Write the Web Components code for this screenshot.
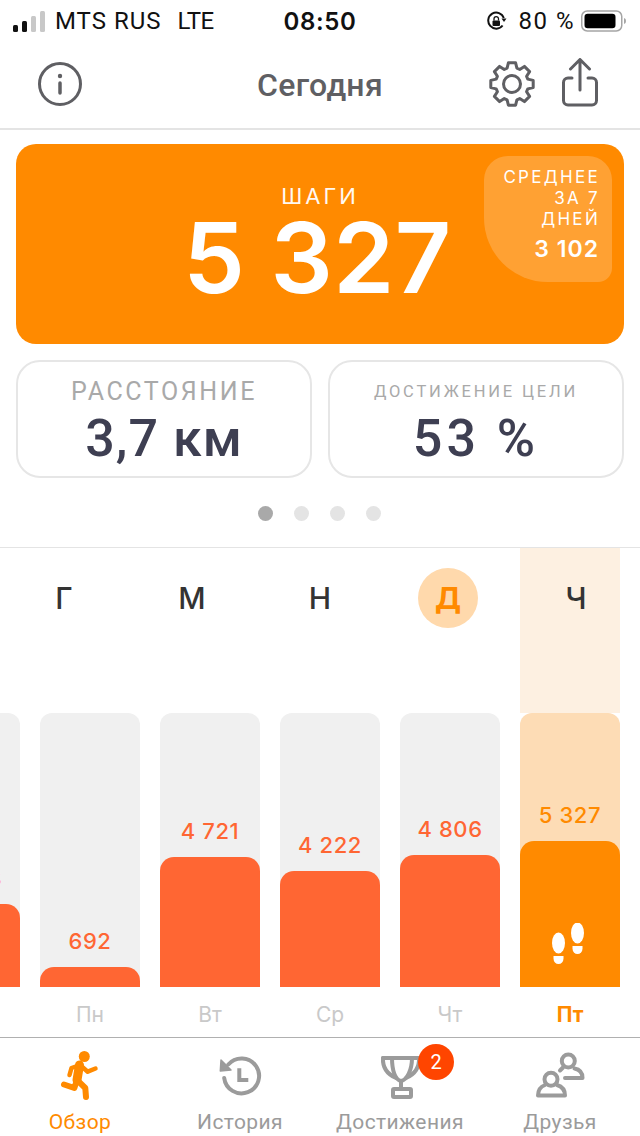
<!DOCTYPE html>
<html lang="ru">
<head>
<meta charset="utf-8">
<title>Сегодня</title>
<style>
	html, body { margin: 0; padding: 0; background: #fff; }
	body { font-family: "Roboto", "Liberation Sans", sans-serif; }
</style>
</head>
<body>
<app-screen>
	<status-bar></status-bar>
	<nav-bar title="Сегодня"></nav-bar>
	<step-card label="ШАГИ" value="5 327" avg="3 102"></step-card>
	<stat-row>
		<stat-card label="РАССТОЯНИЕ" value="3,7 км"></stat-card>
		<stat-card small label="ДОСТИЖЕНИЕ ЦЕЛИ" value="53 %"></stat-card>
	</stat-row>
	<pager-dots></pager-dots>
	<week-chart>
		<week-letters slot="letters">
			<span>Г</span><span>М</span><span>Н</span><span class="now">Д</span><span>Ч</span>
		</week-letters>
		<day-col fill="83" value="3 028"></day-col>
		<day-col day="Пн" fill="20" value="692"></day-col>
		<day-col day="Вт" fill="130" value="4 721"></day-col>
		<day-col day="Ср" fill="116" value="4 222"></day-col>
		<day-col day="Чт" fill="132" value="4 806"></day-col>
		<day-col day="Пт" fill="146" value="5 327" today></day-col>
	</week-chart>
	<tab-bar>
		<tab-item label="Обзор" icon="run" active></tab-item>
		<tab-item label="История" icon="history"></tab-item>
		<tab-item label="Достижения" icon="trophy" badge="2"></tab-item>
		<tab-item label="Друзья" icon="friends"></tab-item>
	</tab-bar>
</app-screen>

<script>
	// plain helper: 8 tooth gear outline
	function gearPath(cx, cy, outer, root) {
		const pts = [];
		for (let i = 0; i < 8; i++) {
			const a = (i * 45 - 90) * Math.PI / 180;
			const p = (r, t) => `${(cx + r * Math.cos(a + t)).toFixed(1)},${(cy + r * Math.sin(a + t)).toFixed(1)}`;
			pts.push(p(root, -0.3), p(outer, -0.17), p(outer, 0.17), p(root, 0.3));
		}
		return "M" + pts.join(" L") + " Z";
	}

	class Base extends HTMLElement {
		constructor() {
			super();
			this.attachShadow({ mode: "open" });
		}
		attr(name, fallback = "") {
			return this.getAttribute(name) ?? fallback;
		}
	}

	class AppScreen extends Base {
		connectedCallback() {
			this.shadowRoot.innerHTML = `
				<style>
					:host { display: flex; flex-direction: column; width: 640px; height: 1136px; overflow: hidden; background: #fff; }
				</style>
				<slot></slot>`;
		}
	}

	class StatusBar extends Base {
		connectedCallback() {
			this.shadowRoot.innerHTML = `
				<style>
					:host { display: grid; grid-template-columns: 1fr auto 1fr; align-items: center; height: 40px; padding: 2px 13px 0 13px; box-sizing: border-box; font: 400 24px "Roboto", sans-serif; color: #111; flex: none; }
					.left, .right { display: flex; align-items: center; }
					.left { gap: 9px; }
					.mts { letter-spacing: 1px; }
					.lte { margin-left: 7px; letter-spacing: -.5px; }
					.right { justify-content: flex-end; }
					.time { font: 600 24px "Inter", sans-serif; letter-spacing: .6px; }
					.pct { margin: 0 6px 0 11px; letter-spacing: 1.500px; }
				</style>
				<div class="left">
					<svg width="33" height="22" viewBox="0 0 33 22">
						<rect x="0" y="15" width="5" height="7" rx="1.5" fill="#111"/>
						<rect x="9" y="11" width="5" height="11" rx="1.5" fill="#111"/>
						<rect x="18" y="6" width="5" height="16" rx="1.5" fill="#c8c8c8"/>
						<rect x="27" y="1" width="5" height="21" rx="1.5" fill="#c8c8c8"/>
					</svg>
					<span class="mts">MTS RUS</span><span class="lte">LTE</span>
				</div>
				<div class="time">08:50</div>
				<div class="right">
					<svg width="21" height="21" viewBox="0 0 21 21" fill="none">
						<path d="M16.6 14.5A8 8 0 1 1 17.8 7" stroke="#111" stroke-width="2"/>
						<path d="M20.5 7.5 L15.5 7.5 L18 11Z" fill="#111"/>
						<rect x="6.5" y="9.5" width="7.5" height="5.5" rx="1" fill="#111"/>
						<path d="M8 9.5V7.8a2.2 2.2 0 0 1 4.5 0V9.5" stroke="#111" stroke-width="1.3"/>
					</svg>
					<span class="pct">80 %</span>
					<svg width="46" height="22" viewBox="0 0 46 22" fill="none">
						<rect x="0.75" y="1" width="40" height="20" rx="5.5" stroke="#a5a5a5" stroke-width="1.5"/>
						<rect x="3.5" y="3.8" width="31" height="14.4" rx="3.2" fill="#000"/>
						<path d="M43 8v6a3 3 0 0 0 2-3a3 3 0 0 0-2-3Z" fill="#a5a5a5"/>
					</svg>
				</div>`;
		}
	}

	class NavBar extends Base {
		connectedCallback() {
			this.shadowRoot.innerHTML = `
				<style>
					:host { display: flex; align-items: center; height: 90px; box-sizing: border-box; border-bottom: 2px solid #e4e4e4; padding: 0 38px; color: #5f5f63; flex: none; }
					.side { width: 170px; display: flex; align-items: center; box-sizing: border-box; }
					.right { justify-content: flex-end; gap: 26px; padding-right: 4px; }
					h1 { flex: 1; margin: 0; text-align: center; font: 500 32px "Roboto", sans-serif; letter-spacing: .3px; color: #5f5f63; padding-top: 2px; white-space: nowrap; }
					svg { display: block; fill: none; stroke: currentColor; }
				</style>
				<div class="side">
					<svg width="44" height="44" viewBox="0 0 44 44" stroke-width="3">
						<circle cx="22" cy="22" r="20.5"/>
						<path d="M22 21v10" stroke-linecap="round" stroke-width="3.5"/>
						<circle cx="22" cy="14" r="2.2" fill="currentColor" stroke="none"/>
					</svg>
				</div>
				<h1>${this.attr("title")}</h1>
				<div class="side right">
					<svg width="48" height="48" viewBox="0 0 48 48" stroke-width="3" stroke-linejoin="round">
						<path d="${gearPath(24, 24, 21.5, 16.5)}"/>
						<circle cx="24" cy="24" r="8.500"/>
					</svg>
					<svg width="36" height="50" viewBox="0 0 36 50" stroke-width="3" stroke-linecap="round" stroke-linejoin="round" style="margin-top:-2px">
						<path d="M10 20H6a4.500 4.500 0 0 0-4.500 4.500V42.500A4.500 4.500 0 0 0 6 47H30a4.500 4.500 0 0 0 4.500-4.500V24.500A4.500 4.500 0 0 0 30 20H26"/>
						<path d="M18 32V2M8.500 11L18 1.500L27.500 11"/>
					</svg>
				</div>`;
		}
	}

	class StepCard extends Base {
		connectedCallback() {
			this.shadowRoot.innerHTML = `
				<style>
					:host { display: flex; flex-direction: column; align-items: center; position: relative; flex: none; height: 200px; margin: 14px 16px 0; background: #ff8a00; border-radius: 20px; color: #fff; box-sizing: border-box; padding-top: 38px; }
					.label { font: 400 22px/28px "Inter", sans-serif; letter-spacing: 3px; opacity: .95; }
					.value { font: 600 98px/92px "Inter", sans-serif; letter-spacing: .5px; margin: 2px 5px 0 0; }
					.avg { position: absolute; top: 12px; right: 12px; width: 128px; height: 126px; box-sizing: border-box; padding: 11px 12px 0 0; text-align: right; background: rgba(255,255,255,.2); border-radius: 24px 24px 14px 64px; font: 400 17px/21px "Inter", sans-serif; letter-spacing: 2.300px; }
					.avg b { display: block; font: 600 23px/30px "Inter", sans-serif; letter-spacing: 1px; margin-top: 4px; padding-right: 1px; }
				</style>
				<div class="label">${this.attr("label")}</div>
				<div class="value">${this.attr("value")}</div>
				<div class="avg">СРЕДНЕЕ<br>ЗА 7<br>ДНЕЙ<b>${this.attr("avg")}</b></div>`;
		}
	}

	class StatRow extends Base {
		connectedCallback() {
			this.shadowRoot.innerHTML = `
				<style>
					:host { display: grid; grid-template-columns: 296px 296px; justify-content: space-between; margin: 16px 16px 0; height: 118px; flex: none; }
				</style>
				<slot></slot>`;
		}
	}

	class StatCard extends Base {
		connectedCallback() {
			const small = this.hasAttribute("small");
			this.shadowRoot.innerHTML = `
				<style>
					:host { display: flex; flex-direction: column; align-items: center; box-sizing: border-box; border: 2px solid #e6e6e6; border-radius: 24px; padding-top: ${small ? 18 : 15}px; color: #3e3f52; }
					.label { font: 400 ${small ? "16.500px/24px" : "25px/30px"} "Roboto", sans-serif; letter-spacing: ${small ? 2.8 : 2.6}px; color: #a9a9a9; white-space: nowrap; }
					.value { font: 500 52px/${small ? 61 : 55}px "Roboto", sans-serif; margin-top: 4px; letter-spacing: ${small ? 4 : 1}px; white-space: nowrap; }
				</style>
				<div class="label">${this.attr("label")}</div>
				<div class="value">${this.attr("value")}</div>`;
		}
	}

	class PagerDots extends Base {
		connectedCallback() {
			this.shadowRoot.innerHTML = `
				<style>
					:host { display: flex; justify-content: center; align-items: center; gap: 21px; height: 69px; padding: 2px 2px 0 0; box-sizing: border-box; flex: none; }
					i { width: 15px; height: 15px; border-radius: 50%; background: #e4e4e4; }
					i:first-of-type { background: #a9a9a9; }
				</style>
				<i></i><i></i><i></i><i></i>`;
		}
	}

	class WeekChart extends Base {
		connectedCallback() {
			this.shadowRoot.innerHTML = `
				<style>
					:host { display: grid; flex: 1; border-top: 1px solid #e4e4e4; overflow: hidden; }
					.strip { grid-area: 1 / 1; display: flex; gap: 20px; margin-left: -80px; }
					::slotted(week-letters) { grid-area: 1 / 1; }
				</style>
				<div class="strip"><slot></slot></div>
				<slot name="letters"></slot>`;
		}
	}

	// the letter row runs on its own 5 column grid, not on the bar columns
	class WeekLetters extends Base {
		connectedCallback() {
			this.shadowRoot.innerHTML = `
				<style>
					:host { display: grid; grid-template-columns: repeat(5, 128px); align-self: start; padding-top: 20px; }
					::slotted(span) { justify-self: center; width: 60px; height: 60px; border-radius: 50%; display: flex; align-items: center; justify-content: center; font: 500 30px "Inter", sans-serif; color: #333; }
					::slotted(.now) { color: #ff8a00; background: #ffd9ac; font-weight: 700; }
				</style>
				<slot></slot>`;
		}
	}

	class DayCol extends Base {
		connectedCallback() {
			const today = this.hasAttribute("today");
			const accent = today ? "#ff8a00" : "#ff6633";
			const feet = today ? `
				<svg width="32" height="42" viewBox="0 0 32 42" fill="#fff">
					<ellipse cx="6.500" cy="20" rx="6.500" ry="10.500"/>
					<path d="M1.500 33h10v2.500a5 5.500 0 0 1-10 0Z"/>
					<ellipse cx="25.500" cy="10" rx="6.500" ry="10.500"/>
					<path d="M20.500 23h10v2.500a5 5.500 0 0 1-10 0Z"/>
				</svg>` : "";
			this.shadowRoot.innerHTML = `
				<style>
					:host { display: flex; flex-direction: column; width: 100px; flex: none; }
					.head { height: 165px; background: ${today ? "#fdf0e1" : "transparent"}; }
					.track { height: 274px; display: flex; flex-direction: column; justify-content: flex-end; align-items: stretch; background: ${today ? "#fddcb5" : "#f0f0f0"}; border-radius: 12px 12px 0 0; }
					.num { text-align: center; font: 500 22px/26px "Inter", sans-serif; letter-spacing: .6px; color: ${accent}; margin-bottom: 13px; }
					.fill { display: flex; justify-content: center; align-items: flex-end; box-sizing: border-box; padding: ${today ? "0 4px 22px 0" : "0"}; background: ${accent}; border-radius: 14px 14px 0 0; }
					.fill svg { display: block; flex: none; }
					.day { height: 50px; box-sizing: border-box; padding-top: 15px; text-align: center; font: ${today ? 700 : 400} 21px/26px "Inter", sans-serif; color: ${today ? "#ff8a00" : "#c9c9c9"}; }
				</style>
				<div class="head"></div>
				<div class="track">
					<div class="num">${this.attr("value")}</div>
					<div class="fill" style="height:${this.attr("fill")}px">${feet}</div>
				</div>
				<div class="day">${this.attr("day")}</div>`;
		}
	}

	class TabBar extends Base {
		connectedCallback() {
			this.shadowRoot.innerHTML = `
				<style>
					:host { display: grid; grid-template-columns: repeat(4, 160px); height: 99px; box-sizing: border-box; border-top: 1px solid #b0b0b0; flex: none; }
				</style>
				<slot></slot>`;
		}
	}

	const TAB_ICONS = {
		run: `<g fill="none" stroke="#ff8a00" stroke-linecap="round" stroke-linejoin="round">
				<path d="M24.500 15 L22 30" stroke-width="9"/>
				<path d="M22 30 L30.300 38 L31 47" stroke-width="6"/>
				<path d="M22 30 L19.300 38 L9 34.500" stroke-width="6"/>
				<path d="M25 15 L32.700 21.700 L40.500 18.500" stroke-width="4.500"/>
				<path d="M25 15 L16.500 18 L14.500 25" stroke-width="4.500"/>
			</g><circle cx="29.300" cy="6.500" r="5.500" fill="#ff8a00"/>`,
		history: `<g fill="none" stroke="#9b9b9b" stroke-width="4" stroke-linecap="round" stroke-linejoin="round">
				<path d="M13.300 14.500 A17.500 17.500 0 1 1 9.200 28"/>
				<path d="M24.300 18.300 V30 H33.300" stroke-linecap="butt" stroke-linejoin="miter"/>
			</g><path d="M6 10 L5.300 21 L16 20 Z" fill="#9b9b9b" stroke="#9b9b9b" stroke-width="1.500" stroke-linejoin="round"/>`,
		trophy: `<g fill="none" stroke="#9b9b9b" stroke-width="4" stroke-linecap="round" stroke-linejoin="round">
				<path d="M8 8 H44"/>
				<path d="M8 8 C7.500 17 12 24 21 28"/>
				<path d="M44 8 C44.500 17 40 24 31 28"/>
				<path d="M17 8 C17 20 20 30 26 31 C32 30 37 20 37 8"/>
				<path d="M26 31 V39"/>
				<rect x="18" y="39" width="18" height="8" rx="1"/>
			</g>`,
		friends: `<g fill="none" stroke="#9b9b9b" stroke-width="4" stroke-linecap="round" stroke-linejoin="round">
				<circle cx="33.300" cy="11" r="6.500"/>
				<path d="M30 28 H47.500 C47.500 23 45 19.500 39.500 18.500"/>
				<path d="M28 17.500 L25 20.500"/>
				<circle cx="16" cy="29.300" r="6.500"/>
				<path d="M10 35 C6 36.500 3 40 3 45.500 H30 C30 40 27 36.500 22 35"/>
			</g>`,
	};

	class TabItem extends Base {
		connectedCallback() {
			const active = this.hasAttribute("active");
			const badge = this.attr("badge");
			this.shadowRoot.innerHTML = `
				<style>
					:host { display: flex; flex-direction: column; align-items: center; padding-top: 12px; color: ${active ? "#ff8a00" : "#9b9b9b"}; }
					.icon { position: relative; width: 50px; height: 52px; }
					svg { display: block; }
					.label { font: 400 21px/26px "Roboto", sans-serif; letter-spacing: .4px; margin-top: 7px; white-space: nowrap; }
					.badge { position: absolute; left: 43px; top: -6px; width: 36px; height: 36px; border-radius: 50%; background: #ff4500; color: #fff; font: 400 20px/36px "Roboto", sans-serif; text-align: center; }
				</style>
				<div class="icon">
					<svg width="50" height="52" viewBox="0 0 50 52">${TAB_ICONS[this.attr("icon")]}</svg>
					${badge ? `<div class="badge">${badge}</div>` : ""}
				</div>
				<div class="label">${this.attr("label")}</div>`;
		}
	}

	customElements.define("app-screen", AppScreen);
	customElements.define("status-bar", StatusBar);
	customElements.define("nav-bar", NavBar);
	customElements.define("step-card", StepCard);
	customElements.define("stat-row", StatRow);
	customElements.define("stat-card", StatCard);
	customElements.define("pager-dots", PagerDots);
	customElements.define("week-chart", WeekChart);
	customElements.define("week-letters", WeekLetters);
	customElements.define("day-col", DayCol);
	customElements.define("tab-bar", TabBar);
	customElements.define("tab-item", TabItem);
</script>
</body>
</html>
